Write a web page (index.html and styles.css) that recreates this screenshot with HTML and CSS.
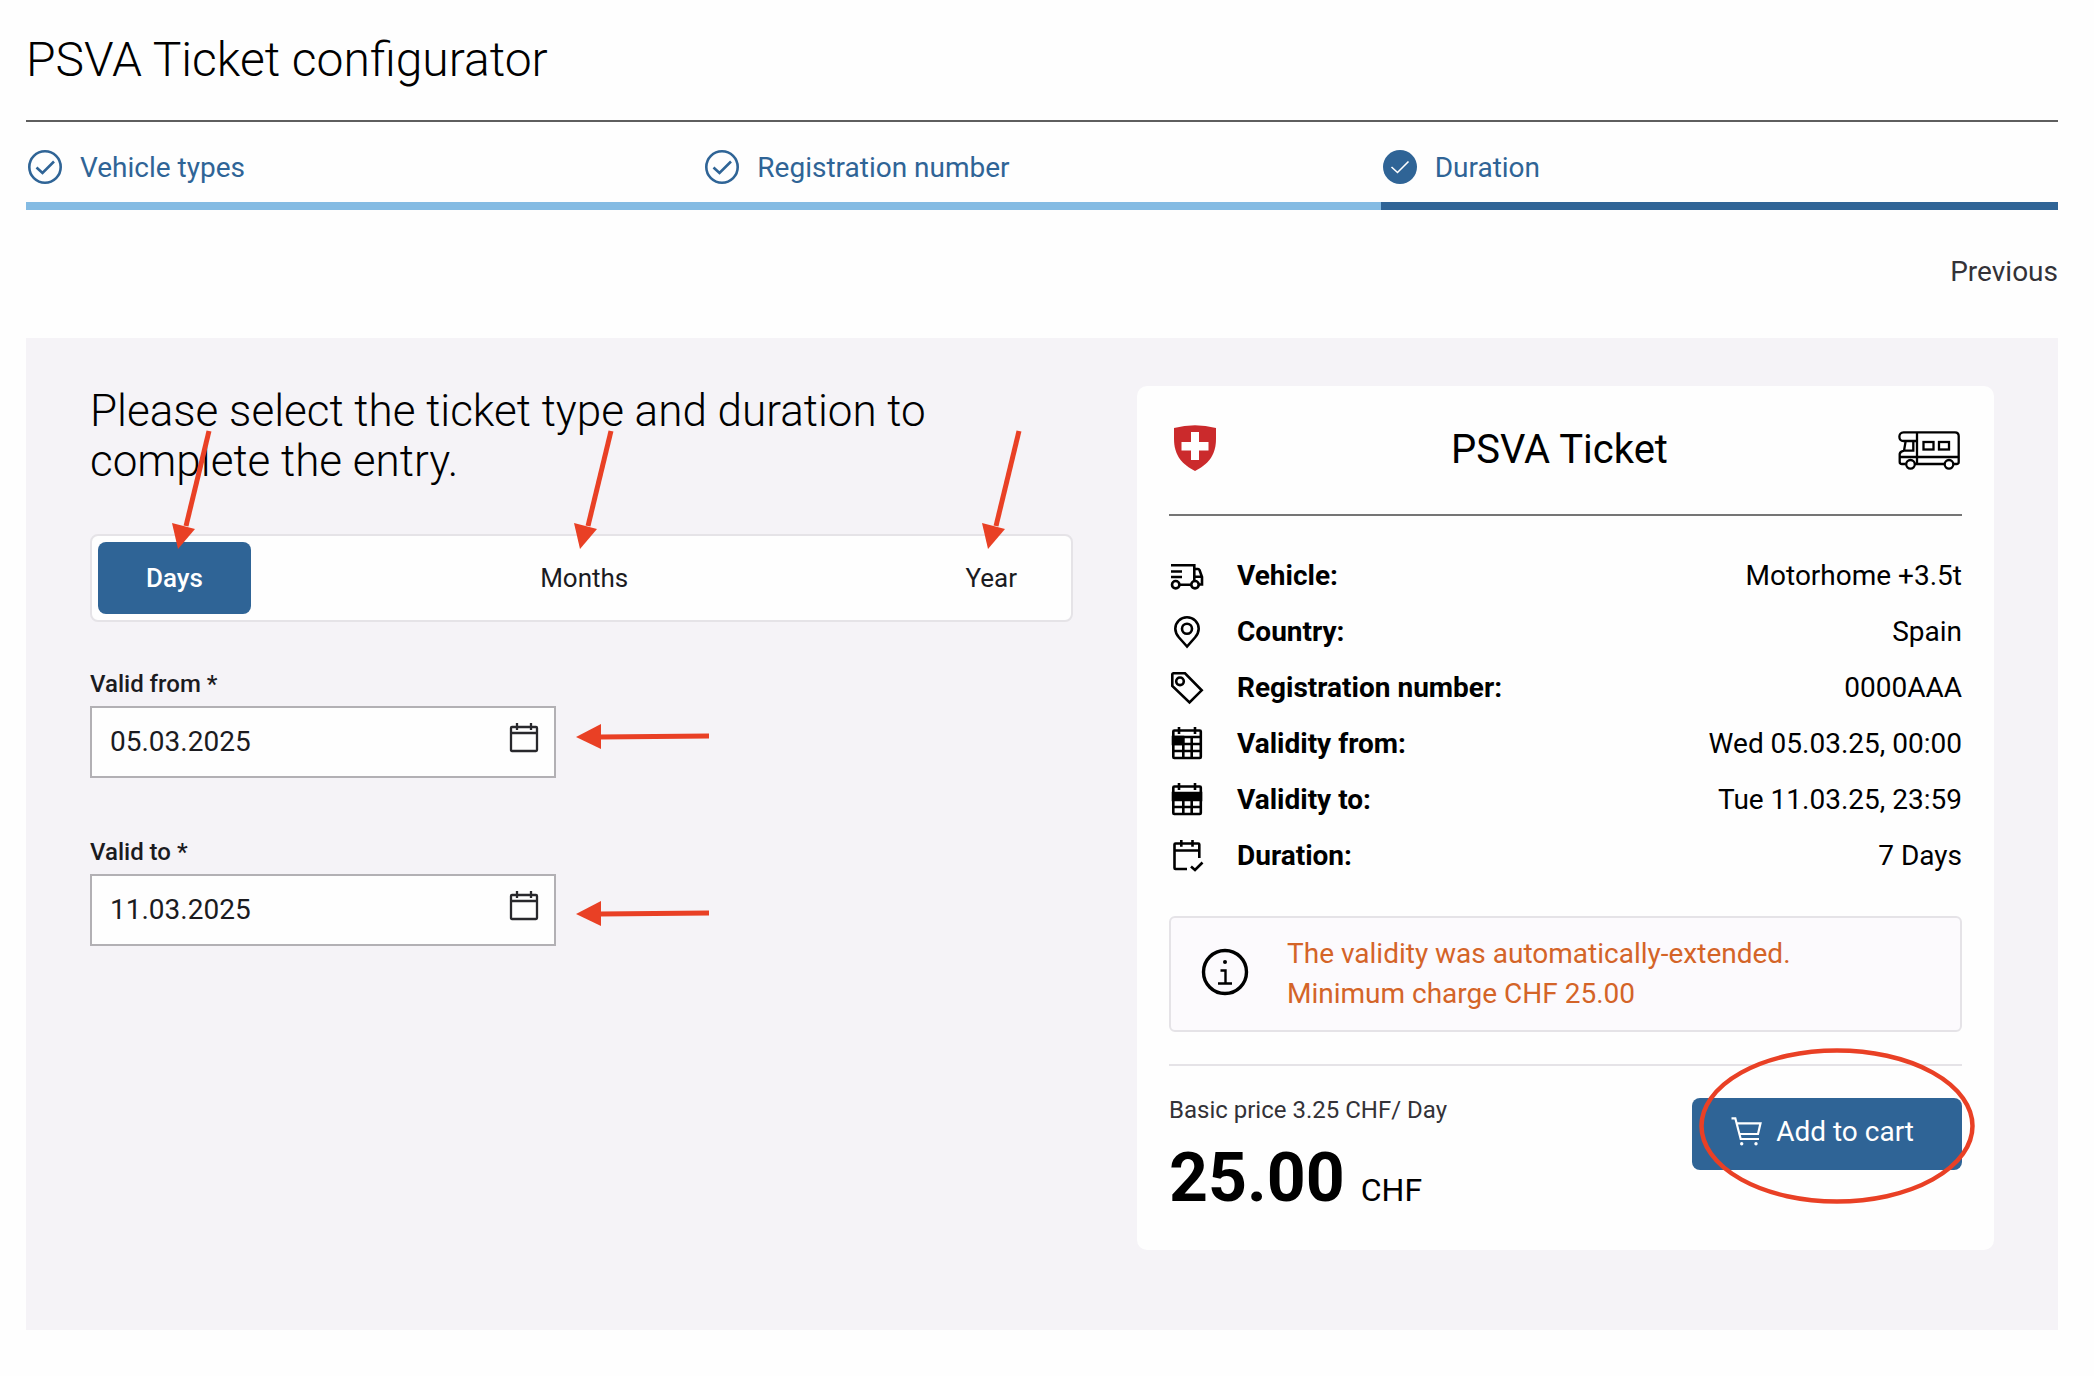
FILE: index.html
```html
<!DOCTYPE html>
<html lang="en">
<head>
<meta charset="utf-8">
<meta name="viewport" content="width=device-width, initial-scale=1">
<title>PSVA Ticket configurator</title>
<link rel="stylesheet" href="styles.css">
</head>
<body>
<svg class="defs" aria-hidden="true">
  <symbol id="arrow-down" viewBox="0 0 48 124">
    <path d="M41 3 L18 98" fill="none" stroke="#e94025" stroke-width="5"/>
    <path d="M10 121 L4 95 L27 101 Z" fill="#e94025"/>
  </symbol>
  <symbol id="arrow-left" viewBox="0 0 134 26">
    <path d="M24 14 L133 13" fill="none" stroke="#e94025" stroke-width="5"/>
    <path d="M0 14 L25 1 V26 Z" fill="#e94025"/>
  </symbol>
  <symbol id="calendar" viewBox="0 0 32 40">
    <path d="M4 5 H28 Q29 5 29 6 V28 Q29 29 28 29 H4 Q3 29 3 28 V6 Q3 5 4 5 Z M3 11 H29 M9 1 V8 M23 1 V8" fill="none" stroke="currentColor" stroke-width="2.300"/>
  </symbol>
</svg>

<header class="page-header">
  <h1 class="page-title">PSVA Ticket configurator</h1>
</header>

<ol class="steps">
  <li class="step">
    <svg class="step-icon" viewBox="0 0 34 34" aria-hidden="true"><circle cx="17" cy="17" r="15.7" fill="none" stroke="currentColor" stroke-width="2.6"/><path d="M8.500 17.500 L14.500 23 L26 11.500" fill="none" stroke="currentColor" stroke-width="2.600"/></svg>
    <span>Vehicle types</span>
  </li>
  <li class="step">
    <svg class="step-icon" viewBox="0 0 34 34" aria-hidden="true"><circle cx="17" cy="17" r="15.7" fill="none" stroke="currentColor" stroke-width="2.6"/><path d="M8.500 17.500 L14.500 23 L26 11.500" fill="none" stroke="currentColor" stroke-width="2.600"/></svg>
    <span>Registration number</span>
  </li>
  <li class="step step-current" aria-current="step">
    <svg class="step-icon" viewBox="0 0 34 34" aria-hidden="true"><circle cx="17" cy="17" r="17" fill="currentColor"/><path d="M8.500 17 L14.500 22.500 L25.500 11.500" fill="none" stroke="#fff" stroke-width="1.600"/></svg>
    <span>Duration</span>
  </li>
</ol>

<nav class="step-nav"><a class="previous" href="#">Previous</a></nav>

<main class="panel">
  <form class="config">
    <h2 class="config-title">Please select the ticket type and duration to complete the entry.</h2>
    <div class="segments">
      <button type="button" class="segment segment-active" aria-pressed="true">Days<svg class="mark-down mark-days" aria-hidden="true"><use href="#arrow-down"/></svg></button>
      <button type="button" class="segment" aria-pressed="false">Months<svg class="mark-down mark-months" aria-hidden="true"><use href="#arrow-down"/></svg></button>
      <button type="button" class="segment" aria-pressed="false">Year<svg class="mark-down mark-year" aria-hidden="true"><use href="#arrow-down"/></svg></button>
    </div>
    <div class="fields">
      <div class="field">
        <label class="field-label" for="valid-from">Valid from *</label>
        <div class="date-box">
          <input class="date-input" id="valid-from" type="text" value="05.03.2025">
          <button type="button" class="date-button" aria-label="Open calendar"><svg class="date-icon" aria-hidden="true"><use href="#calendar"/></svg></button>
          <svg class="mark-left mark-from" aria-hidden="true"><use href="#arrow-left"/></svg>
        </div>
      </div>
      <div class="field">
        <label class="field-label" for="valid-to">Valid to *</label>
        <div class="date-box">
          <input class="date-input" id="valid-to" type="text" value="11.03.2025">
          <button type="button" class="date-button" aria-label="Open calendar"><svg class="date-icon" aria-hidden="true"><use href="#calendar"/></svg></button>
          <svg class="mark-left mark-to" aria-hidden="true"><use href="#arrow-left"/></svg>
        </div>
      </div>
    </div>
  </form>

  <section class="card">
    <div class="card-header">
      <svg class="shield" viewBox="-5 0 52 50" aria-hidden="true"><path d="M0 3 Q21 -2.500 42 3 V14 C42 31 33 40 21 46 C9 40 0 31 0 14 Z" fill="#cb2a2c"/><path d="M17 7 H25 V17 H34.500 V25.500 H25 V35 H17 V25.500 H7.500 V17 H17 Z" fill="#fff"/></svg>
      <h2 class="card-title">PSVA Ticket</h2>
      <svg class="van" viewBox="0 0 64 40" aria-hidden="true"><g fill="none" stroke="#000" stroke-width="2.300"><path d="M7.700 34 H4 Q1.700 34 1.700 32 V24 Q2 21.500 6 20.700 L7.700 11 H5.500 C0 11 0 2.300 5.500 2.300 H57 Q60.700 2.300 60.700 6 V32 Q60.700 34 58.500 34 H55.500 M17 34 H46.500 M5.500 11 H19 M19 2.300 V34 M15.300 11 V20.700 H6 M1.700 27 H60.700"/><rect x="25.500" y="12" width="10" height="7.500"/><rect x="41" y="12" width="10" height="7.500"/><circle cx="12.500" cy="34.300" r="4.300"/><circle cx="51" cy="34.300" r="4.300"/></g></svg>
    </div>

    <dl class="details">
      <div class="detail">
        <dt class="detail-label"><svg class="detail-icon" viewBox="0 0 32 32" aria-hidden="true"><path d="M0 5.300 H23.300 V21 M23.300 9 H27 Q28 9 28.500 10 L31 17 V24.500 H28 M24 16.700 H31 M8.500 24.700 H20 M0 11.500 H11 M0 17 H11"/><circle cx="4.700" cy="24.700" r="3.700"/><circle cx="24" cy="24.700" r="3.700"/></svg>Vehicle:</dt>
        <dd class="detail-value">Motorhome +3.5t</dd>
      </div>
      <div class="detail">
        <dt class="detail-label"><svg class="detail-icon" viewBox="0 0 32 32" aria-hidden="true"><path d="M16 30.500 L8 21.500 C5.500 18.500 4.300 15.500 4.300 12.700 A11.700 11.500 0 0 1 27.700 12.700 C27.700 15.500 26.500 18.500 24 21.500 Z"/><circle cx="16" cy="12.700" r="5"/></svg>Country:</dt>
        <dd class="detail-value">Spain</dd>
      </div>
      <div class="detail">
        <dt class="detail-label"><svg class="detail-icon" viewBox="0 0 32 32" aria-hidden="true"><path d="M2.500 1.300 H14 L30.700 18.300 L18.500 30.500 L1.300 14 V2.500 Q1.300 1.300 2.500 1.300 Z"/><circle cx="9" cy="9.300" r="3.800"/></svg>Registration number:</dt>
        <dd class="detail-value">0000AAA</dd>
      </div>
      <div class="detail">
        <dt class="detail-label"><svg class="detail-icon" viewBox="0 0 32 32" aria-hidden="true"><rect x="2.300" y="2.500" width="27.500" height="27.500" rx="1"/><path d="M8 -1 V6 M24 -1 V6 M2 9 H30 M2 16 H30 M2 23 H30 M12.300 9 V30 M20.700 9 V30"/><path class="solid" d="M2 9 H12 V16 H2 Z"/></svg>Validity from:</dt>
        <dd class="detail-value">Wed 05.03.25, 00:00</dd>
      </div>
      <div class="detail">
        <dt class="detail-label"><svg class="detail-icon" viewBox="0 0 32 32" aria-hidden="true"><rect x="2.300" y="2.500" width="27.500" height="27.500" rx="1"/><path d="M8 -1 V6 M24 -1 V6 M2 23 H30 M12.300 16 V30 M20.700 16 V30"/><path class="solid" d="M2 9 H30 V16 H2 Z"/></svg>Validity to:</dt>
        <dd class="detail-value">Tue 11.03.25, 23:59</dd>
      </div>
      <div class="detail">
        <dt class="detail-label"><svg class="detail-icon" viewBox="0 0 32 32" aria-hidden="true"><path d="M28.300 18 V4.500 Q28.300 3.500 27.300 3.500 H4.500 Q3.500 3.500 3.500 4.500 V28 Q3.500 29 4.500 29 H16 M3.500 10.500 H28.300 M10.300 0 V6.700 M21.500 0 V6.700 M20 26.500 L24 30 L31.500 22.500"/></svg>Duration:</dt>
        <dd class="detail-value">7 Days</dd>
      </div>
    </dl>

    <div class="notice">
      <svg class="notice-icon" viewBox="0 0 48 48" aria-hidden="true"><circle cx="24" cy="22" r="21.500" fill="none" stroke="#000" stroke-width="3.400"/><circle cx="24" cy="12" r="2"/><path d="M19.500 20.500 H24.500 V33.500 M17 33.500 H31" fill="none" stroke="#000" stroke-width="2.400"/></svg>
      <p class="notice-text">The validity was automatically-extended.<br>Minimum charge CHF 25.00</p>
    </div>

    <div class="checkout">
      <div>
        <p class="base-price">Basic price 3.25 CHF/ Day</p>
        <p class="total"><strong class="amount">25.00</strong> <span class="currency">CHF</span></p>
      </div>
      <div class="cart-wrap">
        <button type="button" class="cart-button"><svg class="cart-icon" viewBox="0 0 32 32" aria-hidden="true"><path d="M0.500 2.300 H4.300 L9.700 23 H28 M5.700 7.300 H29.500 L27 18 H8.600" fill="none" stroke="#fff" stroke-width="2.200"/><circle cx="10.700" cy="27.700" r="1.700" fill="#fff"/><circle cx="25" cy="27.700" r="1.700" fill="#fff"/></svg>Add to cart</button>
        <svg class="mark-ring" viewBox="0 0 276 156" aria-hidden="true"><ellipse cx="138" cy="78" rx="135.500" ry="75.500" fill="none" stroke="#e94025" stroke-width="4.500"/></svg>
      </div>
    </div>
  </section>
</main>
</body>
</html>
```
FILE: styles.css
```css
* {
  box-sizing: border-box;
}

body {
  margin: 0;
  padding: 0 36px 46px 26px;
  background: #fefefe;
  color: #000;
  font-family: Roboto, "Liberation Sans", sans-serif;
  font-size: 28px;
  line-height: 36px;
}

h1, h2, p, ol, dl, dd {
  margin: 0;
  padding: 0;
}

button, input {
  font: inherit;
}

.defs {
  display: none;
}

.page-header {
  padding: 30px 0;
  border-bottom: 2px solid #5e5e5e;
}

.page-title {
  font-size: 48px;
  font-weight: 300;
  line-height: 60px;
}

/* Progress steps */
.steps {
  display: grid;
  grid-template-columns: repeat(3, 1fr);
  list-style: none;
}

.step {
  display: flex;
  align-items: flex-start;
  gap: 18px;
  padding: 28px 0 16px 2px;
  border-bottom: 8px solid #84bbe3;
  color: #2f6496;
}

.step-current {
  border-bottom-color: #2f6496;
}

.step-icon {
  width: 34px;
  height: 34px;
}

.step-nav {
  display: flex;
  justify-content: flex-end;
  padding: 44px 0 48px;
}

.previous {
  color: #333237;
  text-decoration: none;
}

/* Main panel */
.panel {
  display: grid;
  grid-template-columns: 39fr 34fr;
  align-items: start;
  gap: 64px;
  padding: 48px 64px 80px;
  background: #f5f3f7;
}

.config-title {
  font-size: 44px;
  font-weight: 300;
  line-height: 50px;
}

.segments {
  display: flex;
  justify-content: space-between;
  margin: 48px 0;
  padding: 6px;
  border: 2px solid #e5e3e7;
  border-radius: 8px;
  background: #fefefe;
}

.segment {
  position: relative;
  height: 72px;
  padding: 0 48px;
  border: 0;
  border-radius: 8px;
  background: transparent;
  color: #1b1b1f;
  font-size: 26px;
}

.segment-active {
  background: #2f6496;
  color: #fff;
  font-weight: 500;
}

.fields {
  display: flex;
  flex-direction: column;
  gap: 60px;
  width: calc(50% - 26px);
}

.field-label {
  display: block;
  margin-bottom: 8px;
  color: #1b1b1f;
  font-size: 24px;
  font-weight: 500;
  line-height: 28px;
}

.date-box {
  position: relative;
  display: flex;
  align-items: center;
  height: 72px;
  padding: 0 14px 0 18px;
  border: 2px solid #b2b0b4;
  background: #fefefe;
}

.date-input {
  flex: 1;
  min-width: 0;
  padding: 0;
  border: 0;
  background: transparent;
  color: #1b1b1f;
}

.date-button {
  display: flex;
  padding: 0;
  border: 0;
  background: transparent;
  color: #28282c;
}

.date-icon {
  width: 32px;
  height: 40px;
}

/* Ticket card */
.card {
  padding: 32px;
  border-radius: 10px;
  background: #fefefe;
}

.card-header {
  display: flex;
  align-items: center;
  justify-content: space-between;
  height: 98px;
  padding-bottom: 32px;
  border-bottom: 2px solid #757575;
}

.card-title {
  font-size: 40px;
  font-weight: 400;
  line-height: 48px;
}

.shield {
  width: 52px;
  height: 50px;
}

.van {
  width: 64px;
  height: 40px;
}

.details {
  padding: 32px 0;
}

.detail {
  display: flex;
  justify-content: space-between;
  line-height: 56px;
}

.detail-label {
  display: flex;
  align-items: center;
  gap: 34px;
  padding-left: 2px;
  font-weight: 700;
}

.detail-icon {
  width: 32px;
  height: 32px;
  overflow: visible;
  fill: none;
  stroke: #000;
  stroke-width: 2.6;
}

.detail-icon .solid {
  fill: #000;
}

.notice {
  display: flex;
  align-items: center;
  gap: 38px;
  padding: 16px 30px;
  border: 2px solid #e5e3e7;
  border-radius: 6px;
  background: #fcfafd;
}

.notice-icon {
  flex: none;
  width: 48px;
  height: 48px;
  overflow: visible;
}

.notice-text {
  color: #d46428;
  line-height: 40px;
}

.checkout {
  display: flex;
  justify-content: space-between;
  align-items: flex-start;
  margin-top: 32px;
  padding-top: 32px;
  border-top: 2px solid #e5e3e7;
}

.base-price {
  color: #333237;
  font-size: 24px;
  line-height: 24px;
}

.total {
  display: flex;
  align-items: baseline;
  gap: 16px;
  margin-top: 16px;
  line-height: 80px;
}

.amount {
  font-size: 68px;
  font-weight: 700;
}

.currency {
  font-size: 32px;
  line-height: 36px;
}

.cart-wrap {
  position: relative;
}

.cart-button {
  display: flex;
  align-items: center;
  gap: 13px;
  height: 72px;
  padding: 0 48px 4px 39px;
  border: 0;
  border-radius: 8px;
  background: #2f6496;
  color: #fff;
}

.cart-icon {
  width: 32px;
  height: 32px;
}

/* Hand-drawn marks laid over the controls */
.mark-down,
.mark-left,
.mark-ring {
  position: absolute;
  z-index: 1;
  pointer-events: none;
}

.mark-down {
  top: -114px;
  width: 48px;
  height: 124px;
}

.mark-days {
  left: 70px;
}

.mark-months {
  left: 78px;
}

.mark-year {
  left: 61px;
}

.mark-left {
  left: 484px;
  width: 134px;
  height: 26px;
}

.mark-from {
  top: 15px;
}

.mark-to {
  top: 24px;
}

.mark-ring {
  top: -50px;
  right: -13px;
  width: 276px;
  height: 156px;
}
```
